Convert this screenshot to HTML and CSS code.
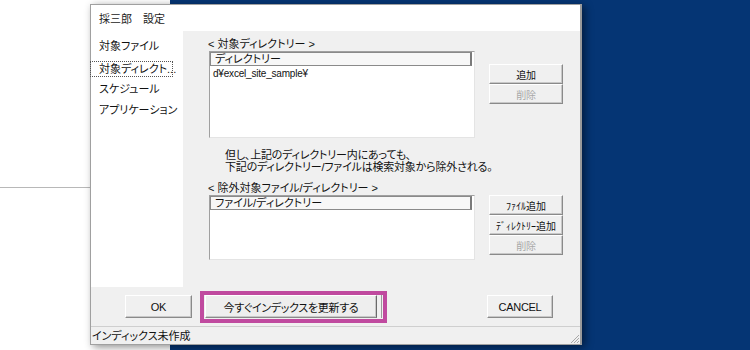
FILE: index.html
```html
<!DOCTYPE html>
<html lang="ja">
<head>
<meta charset="utf-8">
<link rel="stylesheet" href="styles.css">
</head>
<body>
<div class="desktop">
  <div class="desk-left"><div class="desk-line"></div></div>
  <div class="desk-blue"></div>
  <div class="window">
    <div class="titlebar">採三郎　設定</div>
    <div class="main">
      <nav class="nav">
        <div class="nav-item">対象ファイル</div>
        <div class="nav-item focus">対象ディレクト...</div>
        <div class="nav-item">スケジュール</div>
        <div class="nav-item">アプリケーション</div>
      </nav>
      <div class="content">
        <div class="section s1">
          <div class="col">
            <div class="label">&lt; 対象ディレクトリー &gt;</div>
            <div class="listbox lb1">
              <div class="lb-head">ディレクトリー</div>
              <div class="lb-item">d¥excel_site_sample¥</div>
            </div>
          </div>
          <div class="btns b1">
            <button class="btn">追加</button>
            <button class="btn" disabled>削除</button>
          </div>
        </div>
        <div class="note">但し、上記のディレクトリー内にあっても、<br>下記のディレクトリー/ファイルは検索対象から除外される。</div>
        <div class="section s2">
          <div class="col">
            <div class="label">&lt; 除外対象ファイル/ディレクトリー &gt;</div>
            <div class="listbox lb2">
              <div class="lb-head">ファイル/ディレクトリー</div>
            </div>
          </div>
          <div class="btns b2">
            <button class="btn hw">ﾌｧｲﾙ追加</button>
            <button class="btn hw">ﾃﾞｨﾚｸﾄﾘｰ追加</button>
            <button class="btn" disabled>削除</button>
          </div>
        </div>
      </div>
    </div>
    <div class="actions">
      <button class="btn big ok">OK</button>
      <div class="highlight">
        <button class="btn big update">今すぐインデックスを更新する</button>
        <span class="tick"></span>
      </div>
      <button class="btn big cancel">CANCEL</button>
    </div>
    <div class="status">
      <span class="status-text">インディックス未作成</span>
      <svg class="grip" width="12" height="12" viewBox="0 0 12 12">
        <path d="M11 3 L3 11 M11 6 L6 11 M11 9 L9 11" stroke="#a8a8a8" stroke-width="1"/>
      </svg>
    </div>
  </div>
</div>
</body>
</html>
```

FILE: styles.css
```css
* { box-sizing: border-box; }
html, body { margin: 0; padding: 0; }
body {
  width: 750px;
  height: 350px;
  overflow: hidden;
  background: #ffffff;
  font-family: "Liberation Sans", "Noto Sans CJK JP", sans-serif;
  font-feature-settings: "palt";
  color: #000;
}
.desktop {
  position: relative;
  width: 750px;
  height: 350px;
  display: flex;
}
.desk-left {
  width: 170px;
  height: 350px;
  background: #ffffff;
  padding-top: 187px;
}
.desk-line {
  height: 1px;
  background: #b8b8b8;
}
.desk-blue {
  flex: 1;
  background: #053574;
}
.window {
  position: absolute;
  left: 90px;
  top: 4px;
  width: 492px;
  height: 341px;
  background: #f0f0f0;
  border: 1px solid #a0a0a0;
  border-right: 2px solid #9a9a9a;
  box-shadow: 3px 2px 8px rgba(0, 0, 0, 0.45);
  display: flex;
  flex-direction: column;
  font-size: 11px;
}
.titlebar {
  height: 26px;
  background: #ffffff;
  padding: 7px 0 0 8px;
  line-height: 14px;
  font-size: 11px;
  color: #222;
}
.main {
  height: 256px;
  display: flex;
}
.nav {
  width: 92px;
  background: #ffffff;
  padding-top: 5px;
}
.nav-item {
  height: 21px;
  line-height: 21px;
  padding-left: 8px;
  font-size: 11px;
  color: #111;
  white-space: nowrap;
}
.nav-item.focus {
  height: 16px;
  line-height: 14px;
  margin: 4px 10px 2px -1px;
  padding-left: 8px;
  border: 1px dotted #555;
}
.content {
  flex: 1;
  padding: 6px 0 0 25px;
}
.section {
  display: flex;
}
.col {
  width: 267px;
}
.label {
  height: 14px;
  line-height: 14px;
  font-size: 11px;
  color: #111;
  white-space: nowrap;
}
.listbox {
  margin-left: 1px;
  background: #ffffff;
  border-left: 1px solid #a0a0a0;
  border-top: 1px solid #a0a0a0;
  border-right: 1px solid #e4e4e4;
  border-bottom: 1px solid #e4e4e4;
}
.lb1 { height: 87px; }
.lb2 { height: 65px; }
.lb-head {
  height: 14px;
  line-height: 12px;
  padding-left: 4px;
  background: #f7f7f7;
  border: 1px solid #8a8a8a;
  border-right: 2px solid #7a7a7a;
  margin-right: 2px;
  font-size: 11px;
  color: #111;
}
.lb-item {
  padding: 2px 0 0 3px;
  font-size: 10px;
  line-height: 12px;
  letter-spacing: -0.2px;
  color: #111;
}
.btns {
  margin-left: 14px;
  display: flex;
  flex-direction: column;
}
.b1 { margin-top: 27px; }
.b2 { margin-top: 14px; }
.btn {
  width: 74px;
  height: 20px;
  padding: 0;
  margin: 0;
  font-family: "Liberation Sans", "Noto Sans CJK JP", sans-serif;
  font-feature-settings: "palt";
  font-size: 10px;
  color: #111;
  background: #f0f0f0;
  border-top: 1px solid #ffffff;
  border-left: 1px solid #ffffff;
  border-right: 1px solid #8a8a8a;
  border-bottom: 1px solid #8a8a8a;
  box-shadow: inset -1px -1px 0 #c8c8c8;
  white-space: nowrap;
  letter-spacing: -0.3px;
}
.btn.hw {
  font-feature-settings: normal;
  letter-spacing: 0;
}
.btn:disabled {
  color: #a8a8a8;
}
.note {
  margin-top: 11px;
  padding-left: 17px;
  font-size: 11px;
  line-height: 12px;
  letter-spacing: -0.2px;
  color: #111;
  white-space: nowrap;
}
.s2 { margin-top: 8px; }
.actions {
  height: 39px;
  display: flex;
  align-items: flex-start;
  padding: 4px 0 0 34px;
}
.btn.big {
  height: 23px;
  font-size: 11px;
}
.ok {
  width: 67px;
  margin-top: 4px;
}
.highlight {
  margin-left: 8px;
  width: 187px;
  height: 32px;
  border: 4px solid #c04a9f;
  display: flex;
  padding-left: 1px;
}
.update {
  width: 172px;
  margin-top: 0;
  background: #eeeeee;
  border-right: 1px solid #6a6a6a;
}
.tick {
  width: 1px;
  height: 23px;
  margin-left: 4px;
  background: #9a9a9a;
}
.cancel {
  width: 66px;
  margin-top: 4px;
  margin-left: 100px;
  font-size: 10px;
}
.status {
  flex: 1;
  display: flex;
  align-items: center;
  justify-content: space-between;
  border-top: 1px solid #cfcfcf;
  padding-left: 1px;
}
.status-text {
  font-size: 11px;
  color: #111;
  line-height: 14px;
}
.grip {
  align-self: flex-end;
}
```
